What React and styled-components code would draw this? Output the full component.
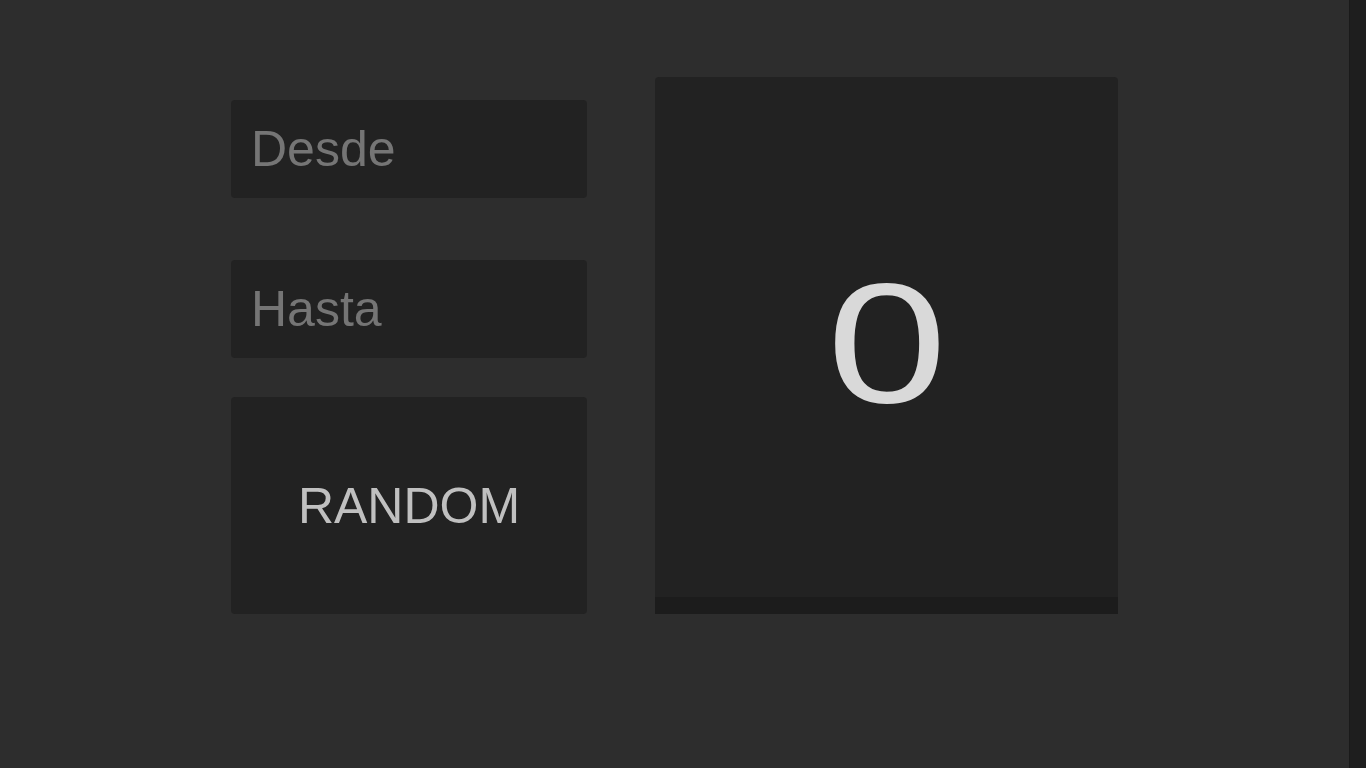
import React, { useState } from "react";
import styled, { createGlobalStyle } from "styled-components";

const GlobalStyle = createGlobalStyle`
    body {
        margin: 0;
        background-color: #2d2d2d;
        font-family: "Liberation Sans", Arial, sans-serif;
    }
`;

const Page = styled.div`
    display: flex;
    min-height: 100vh;
`;

const Layout = styled.main`
    flex: 1;
    display: flex;
    justify-content: center;
    align-items: flex-start;
    gap: 68px;
    padding-top: 77px;
`;

// the dark track on the right edge of the window
const ScrollTrack = styled.div`
    width: 17px;
    flex-shrink: 0;
    background-color: #1e1e1e;
    border-left: 1px solid #1a1a1a;
    box-sizing: border-box;
`;

const Controls = styled.div`
    width: 356px;
    height: 537px;
    display: flex;
    flex-direction: column;
    justify-content: flex-end;
`;

const NumberInput = styled.input`
    width: 100%;
    height: 98px;
    box-sizing: border-box;
    margin-bottom: ${(props) => props.$gap};
    padding: 0 20px;
    border: none;
    border-radius: 4px;
    outline: none;
    background-color: #222222;
    color: #c0c0c0;
    font-family: "Liberation Sans", Arial, sans-serif;
    font-size: 50px;

    &::placeholder {
        color: #757575;
    }
`;

const RandomButton = styled.button`
    width: 100%;
    height: 217px;
    flex-shrink: 0;
    border: none;
    border-radius: 4px;
    background-color: #222222;
    color: #c0c0c0;
    font-family: "Liberation Sans", Arial, sans-serif;
    font-size: 50px;
    cursor: pointer;
`;

const ResultBox = styled.div`
    width: 463px;
    height: 537px;
    display: flex;
    flex-direction: column;
    background-color: #222222;
    border-radius: 4px 4px 0 0;
`;

const ResultValue = styled.div`
    flex: 1;
    display: flex;
    align-items: center;
    justify-content: center;
    padding-top: 4px;
    color: #d9d9d9;
    font-family: "Noto Sans", sans-serif;
    font-size: 164px;
    line-height: 1;

    span {
        display: inline-block;
        transform: scaleX(1.33);
    }
`;

const ResultBar = styled.div`
    height: 17px;
    background-color: #1c1c1c;
`;

function App() {
    const [from, setFrom] = useState("");
    const [to, setTo] = useState("");
    const [result, setResult] = useState(0);

    const handleRandom = () => {
        const min = Number(from) || 0;
        const max = Number(to) || 0;
        setResult(Math.floor(Math.random() * (max - min + 1)) + min);
    };

    return (
        <Page>
            <GlobalStyle />
            <Layout>
                <Controls>
                    <NumberInput
                        type="number"
                        placeholder="Desde"
                        value={from}
                        onChange={(e) => setFrom(e.target.value)}
                        $gap={"62px"}
                    />
                    <NumberInput
                        type="number"
                        placeholder="Hasta"
                        value={to}
                        onChange={(e) => setTo(e.target.value)}
                        $gap={"39px"}
                    />
                    <RandomButton onClick={handleRandom}>RANDOM</RandomButton>
                </Controls>
                <ResultBox>
                    <ResultValue>
                        <span>{result}</span>
                    </ResultValue>
                    <ResultBar />
                </ResultBox>
            </Layout>
            <ScrollTrack />
        </Page>
    );
}

export default App;
